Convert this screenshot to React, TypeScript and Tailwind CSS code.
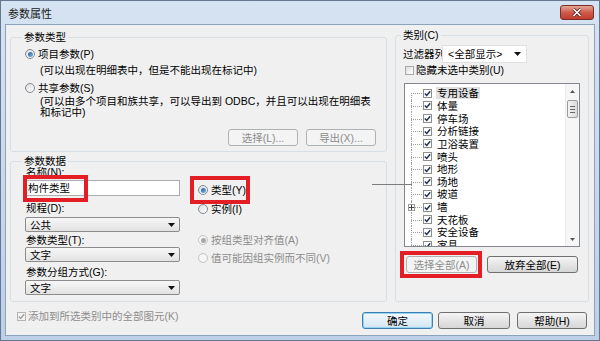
import React from "react";

const categories = [
    "专用设备",
    "体量",
    "停车场",
    "分析链接",
    "卫浴装置",
    "喷头",
    "地形",
    "场地",
    "坡道",
    "墙",
    "天花板",
    "安全设备",
    "家具",
];

function Radio({ checked, disabled }: { checked?: boolean; disabled?: boolean }) {
    return (
        <span
            className={`w-[10px] h-[10px] shrink-0 rounded-full border flex items-center justify-center ${disabled
                ? "border-[#c4c4c4] bg-[#f6f6f6]"
                : "border-[#7f8a96] bg-gradient-to-br from-[#dcdcdc] to-white"
                }`}
        >
            {checked && (
                <span
                    className={`w-[5px] h-[5px] rounded-full ${disabled ? "bg-[#a8a8a8]" : "bg-gradient-to-br from-[#2c5c94] to-[#7ab8e6]"
                        }`}
                />
            )}
        </span>
    );
}

function Check({ disabled }: { disabled?: boolean }) {
    return (
        <span
            className={`w-[9px] h-[9px] shrink-0 border flex items-center justify-center ${disabled ? "border-[#b4b4b4] bg-[#f4f4f4]" : "border-[#8e8f8f] bg-white"
                }`}
        >
            <svg width="7" height="7" viewBox="0 0 7 7">
                <path
                    d="M0.8 3.6 L2.7 5.5 L6.2 1.2"
                    fill="none"
                    stroke={disabled ? "#a0a0a0" : "#1b2f55"}
                    strokeWidth="1.4"
                />
            </svg>
        </span>
    );
}

function Btn({
    children,
    disabled,
    primary,
    className,
}: {
    children: React.ReactNode;
    disabled?: boolean;
    primary?: boolean;
    className?: string;
}) {
    const look = disabled
        ? "border-[#adb2b5] bg-[#f4f4f4] text-[#8c8c8c]"
        : primary
            ? "border-[#3c7fb1] bg-gradient-to-b from-[#f4f9fc] to-[#d4e6f2] shadow-[inset_0_0_0_1px_#93d5f3]"
            : "border-[#707070] bg-gradient-to-b from-[#f5f5f5] to-[#d6d6d6]";
    return (
        <div className={`h-[17px] shrink-0 rounded-[3px] border flex items-center justify-center ${look} ${className ?? ""}`}>
            {children}
        </div>
    );
}

function Arrow() {
    return (
        <svg width="7" height="4" viewBox="0 0 7 4">
            <path d="M0 0 H7 L3.5 4 Z" fill="#111" />
        </svg>
    );
}

function Select({ value, className }: { value: string; className?: string }) {
    return (
        <div
            className={`h-[15px] rounded-[2px] border border-[#8c8c8c] bg-gradient-to-b from-[#f7f7f7] to-[#e2e2e2] flex items-center justify-between pl-[4px] pr-[4px] ${className ?? ""}`}
        >
            <span>{value}</span>
            <Arrow />
        </div>
    );
}

export default function App() {
    return (
        <div className="relative w-[600px] h-[341px] overflow-hidden border border-[#66788f] bg-gradient-to-b from-[#d6e3f2] to-[#bdd0e7] text-[10.5px] leading-[14px] text-black font-['Liberation_Sans','Noto_Sans_CJK_SC',sans-serif]">
            {/* Title bar */}
            <div className="h-[23px] flex items-center justify-between pl-[7px] pr-[5px]">
                <span className="pt-[3px] text-[11px] text-[#1a1a1a]">参数属性</span>
                <div className="w-[34px] h-[15px] rounded-[3px] border border-[#7a2e27] bg-gradient-to-b from-[#e7a595] via-[#cf5b4c] to-[#c13c2c] flex items-center justify-center">
                    <svg width="10" height="9" viewBox="0 0 10 9">
                        <path d="M1.5 1 L8.5 8 M8.5 1 L1.5 8" stroke="#4a1a16" strokeWidth="3" />
                        <path d="M1.5 1 L8.5 8 M8.5 1 L1.5 8" stroke="#fff" strokeWidth="1.6" />
                    </svg>
                </div>
            </div>

            {/* Client area */}
            <div className="ml-[4px] w-[590px] h-[312px] border border-[#8da2bd] bg-[#f0f0f0] flex flex-col">
                <div className="flex items-start pl-[4px]">
                    {/* Left column */}
                    <div className="w-[377px] flex flex-col">
                        <fieldset className="mt-[6px] h-[121px] border border-[#d5dfe5] rounded-[3px] pl-[11px] pr-[10px] pt-[4px]">
                            <legend className="px-[2px] leading-[12px]">参数类型</legend>
                            <div className="flex items-center h-[14px]">
                                <span className="ml-[3px]" />
                                <Radio checked />
                                <span className="ml-[3px]">项目参数(P)</span>
                            </div>
                            <div className="mt-[2px] pl-[18px]">(可以出现在明细表中，但是不能出现在标记中)</div>
                            <div className="mt-[4px] flex items-center h-[14px]">
                                <span className="ml-[3px]" />
                                <Radio />
                                <span className="ml-[3px]">共享参数(S)</span>
                            </div>
                            <div className="mt-[1px] pl-[18px] leading-[11px] whitespace-nowrap">
                                (可以由多个项目和族共享，可以导出到 ODBC，并且可以出现在明细表
                                <br />
                                和标记中)
                            </div>
                            <div className="mt-[11px] flex justify-end gap-[8px]">
                                <Btn disabled className="w-[70px]">选择(L)...</Btn>
                                <Btn disabled className="w-[70px]">导出(X)...</Btn>
                            </div>
                        </fieldset>

                        <fieldset className="mt-[3px] h-[147px] border border-[#d5dfe5] rounded-[3px] pl-[11px]">
                            <legend className="px-[2px] leading-[12px]">参数数据</legend>
                            <div className="flex items-start">
                                <div className="ml-[3px] w-[155px] flex flex-col">
                                    <div className="ml-[1px] leading-[10px]">名称(N):</div>
                                    <div className="mt-[3px] h-[16px] border border-[#abadb3] bg-white pl-[2px] flex items-center">构件类型</div>
                                    <div className="mt-[5px] ml-[1px]">规程(D):</div>
                                    <Select value="公共" className="mt-[2px]" />
                                    <div className="mt-[1px] ml-[1px]">参数类型(T):</div>
                                    <Select value="文字" />
                                    <div className="mt-[3px] ml-[1px]">参数分组方式(G):</div>
                                    <Select value="文字" className="mt-[1px]" />
                                </div>
                                <div className="ml-[18px] flex flex-col">
                                    <div className="mt-[16px] flex items-center h-[14px]">
                                        <Radio checked />
                                        <span className="ml-[3px]">类型(Y)</span>
                                    </div>
                                    <div className="mt-[5px] flex items-center h-[14px]">
                                        <Radio />
                                        <span className="ml-[3px]">实例(I)</span>
                                    </div>
                                    <div className="mt-[17px] flex items-center h-[14px] text-[#8d8d8d]">
                                        <Radio checked disabled />
                                        <span className="ml-[3px]">按组类型对齐值(A)</span>
                                    </div>
                                    <div className="mt-[4px] flex items-center h-[14px] text-[#8d8d8d]">
                                        <Radio disabled />
                                        <span className="ml-[3px]">值可能因组实例而不同(V)</span>
                                    </div>
                                </div>
                            </div>
                        </fieldset>
                    </div>

                    {/* Right column: categories */}
                    <fieldset className="ml-[8px] mt-[4px] w-[194px] h-[273px] border border-[#d5dfe5] rounded-[3px] pl-[5px]">
                        <legend className="px-[2px] leading-[12px]">类别(C)</legend>
                        <div className="mt-[4px] h-[18px] flex items-center">
                            <span className="ml-[2px] w-[39px] overflow-hidden whitespace-nowrap">过滤器列</span>
                            <div className="w-[85px] h-[18px] bg-white border border-[#e0e0e0] flex items-center justify-between pl-[5px] pr-[5px]">
                                <span>&lt;全部显示&gt;</span>
                                <Arrow />
                            </div>
                        </div>
                        <div className="mt-[1px] h-[12px] flex items-center">
                            <span className="ml-[4px]" />
                            <span className="w-[9px] h-[9px] border border-[#a8a8a8] bg-gradient-to-br from-[#dedede] to-white" />
                            <span className="ml-[2px]">隐藏未选中类别(U)</span>
                        </div>

                        <div className="ml-[3px] mt-[7px] w-[176px] h-[164px] border border-[#828790] bg-white flex overflow-hidden">
                            <div className="flex-1 pt-[3px]">
                                {categories.map((c, i) => (
                                    <div key={c} className="flex items-center h-[12.65px]">
                                        <div className="relative w-[17px] h-full shrink-0">
                                            <span
                                                className={`absolute left-[6px] bottom-0 border-l border-dotted border-[#a0a0a0] ${i === 0 ? "top-1/2" : "top-0"}`}
                                            />
                                            <span className="absolute left-[6px] top-1/2 w-[11px] border-t border-dotted border-[#a0a0a0]" />
                                            {c === "墙" && (
                                                <span className="absolute left-[3px] top-[3px] w-[7px] h-[7px] border border-[#9a9a9a] bg-white flex items-center justify-center">
                                                    <svg width="5" height="5" viewBox="0 0 5 5">
                                                        <path d="M0 2.5 H5 M2.5 0 V5" stroke="#444" strokeWidth="1" />
                                                    </svg>
                                                </span>
                                            )}
                                        </div>
                                        <span className="ml-[1px]" />
                                        <Check />
                                        <span className={`ml-[4px] px-[1px] leading-[12px] ${i === 0 ? "bg-[#e2e2e2]" : ""}`}>{c}</span>
                                    </div>
                                ))}
                            </div>
                            <div className="w-[14px] shrink-0 bg-[#f6f6f6] border-l border-[#ececec] flex flex-col items-center">
                                <div className="h-[14px] flex items-center justify-center">
                                    <svg width="5" height="3" viewBox="0 0 5 3">
                                        <path d="M0 3 L2.5 0 L5 3 Z" fill="#555" />
                                    </svg>
                                </div>
                                <div className="mt-[2px] w-[11px] h-[18px] rounded-[2px] border border-[#9b9b9b] bg-gradient-to-r from-[#f4f4f4] to-[#dcdcdc] flex flex-col items-center justify-center gap-[2px]">
                                    <span className="w-[5px] h-px bg-[#666]" />
                                    <span className="w-[5px] h-px bg-[#666]" />
                                    <span className="w-[5px] h-px bg-[#666]" />
                                </div>
                                <div className="flex-1" />
                                <div className="h-[14px] flex items-center justify-center">
                                    <svg width="5" height="3" viewBox="0 0 5 3">
                                        <path d="M0 0 L2.5 3 L5 0 Z" fill="#555" />
                                    </svg>
                                </div>
                            </div>
                        </div>

                        <div className="mt-[9px] flex">
                            <Btn disabled className="ml-[5px] w-[71px]">选择全部(A)</Btn>
                            <Btn className="ml-[10px] w-[91px]">放弃全部(E)</Btn>
                        </div>
                    </fieldset>
                </div>

                {/* Bottom row */}
                <div className="flex items-start">
                    <div className="ml-[11px] mt-[8px] flex items-center h-[12px] text-[#8d8d8d]">
                        <Check disabled />
                        <span className="ml-[2px]">添加到所选类别中的全部图元(K)</span>
                    </div>
                    <div className="ml-auto mr-[7px] mt-[10px] flex">
                        <Btn primary className="w-[71px]">确定</Btn>
                        <Btn className="ml-[5px] w-[72px]">取消</Btn>
                        <Btn className="ml-[7px] w-[70px]">帮助(H)</Btn>
                    </div>
                </div>
            </div>

            {/* Annotation boxes */}
            <div className="absolute left-[22px] top-[174px] w-[65px] h-[27px] border-[4px] border-[#e31e24]" />
            <div className="absolute left-[189px] top-[175px] w-[60px] h-[28px] border-[4px] border-[#e31e24]" />
            <div className="absolute left-[399px] top-[250px] w-[82px] h-[27px] border-[4px] border-[#e31e24]" />
            <div className="absolute left-[371px] top-[183px] w-[40px] h-px bg-[#7d7d7d]" />
        </div>
    );
}
